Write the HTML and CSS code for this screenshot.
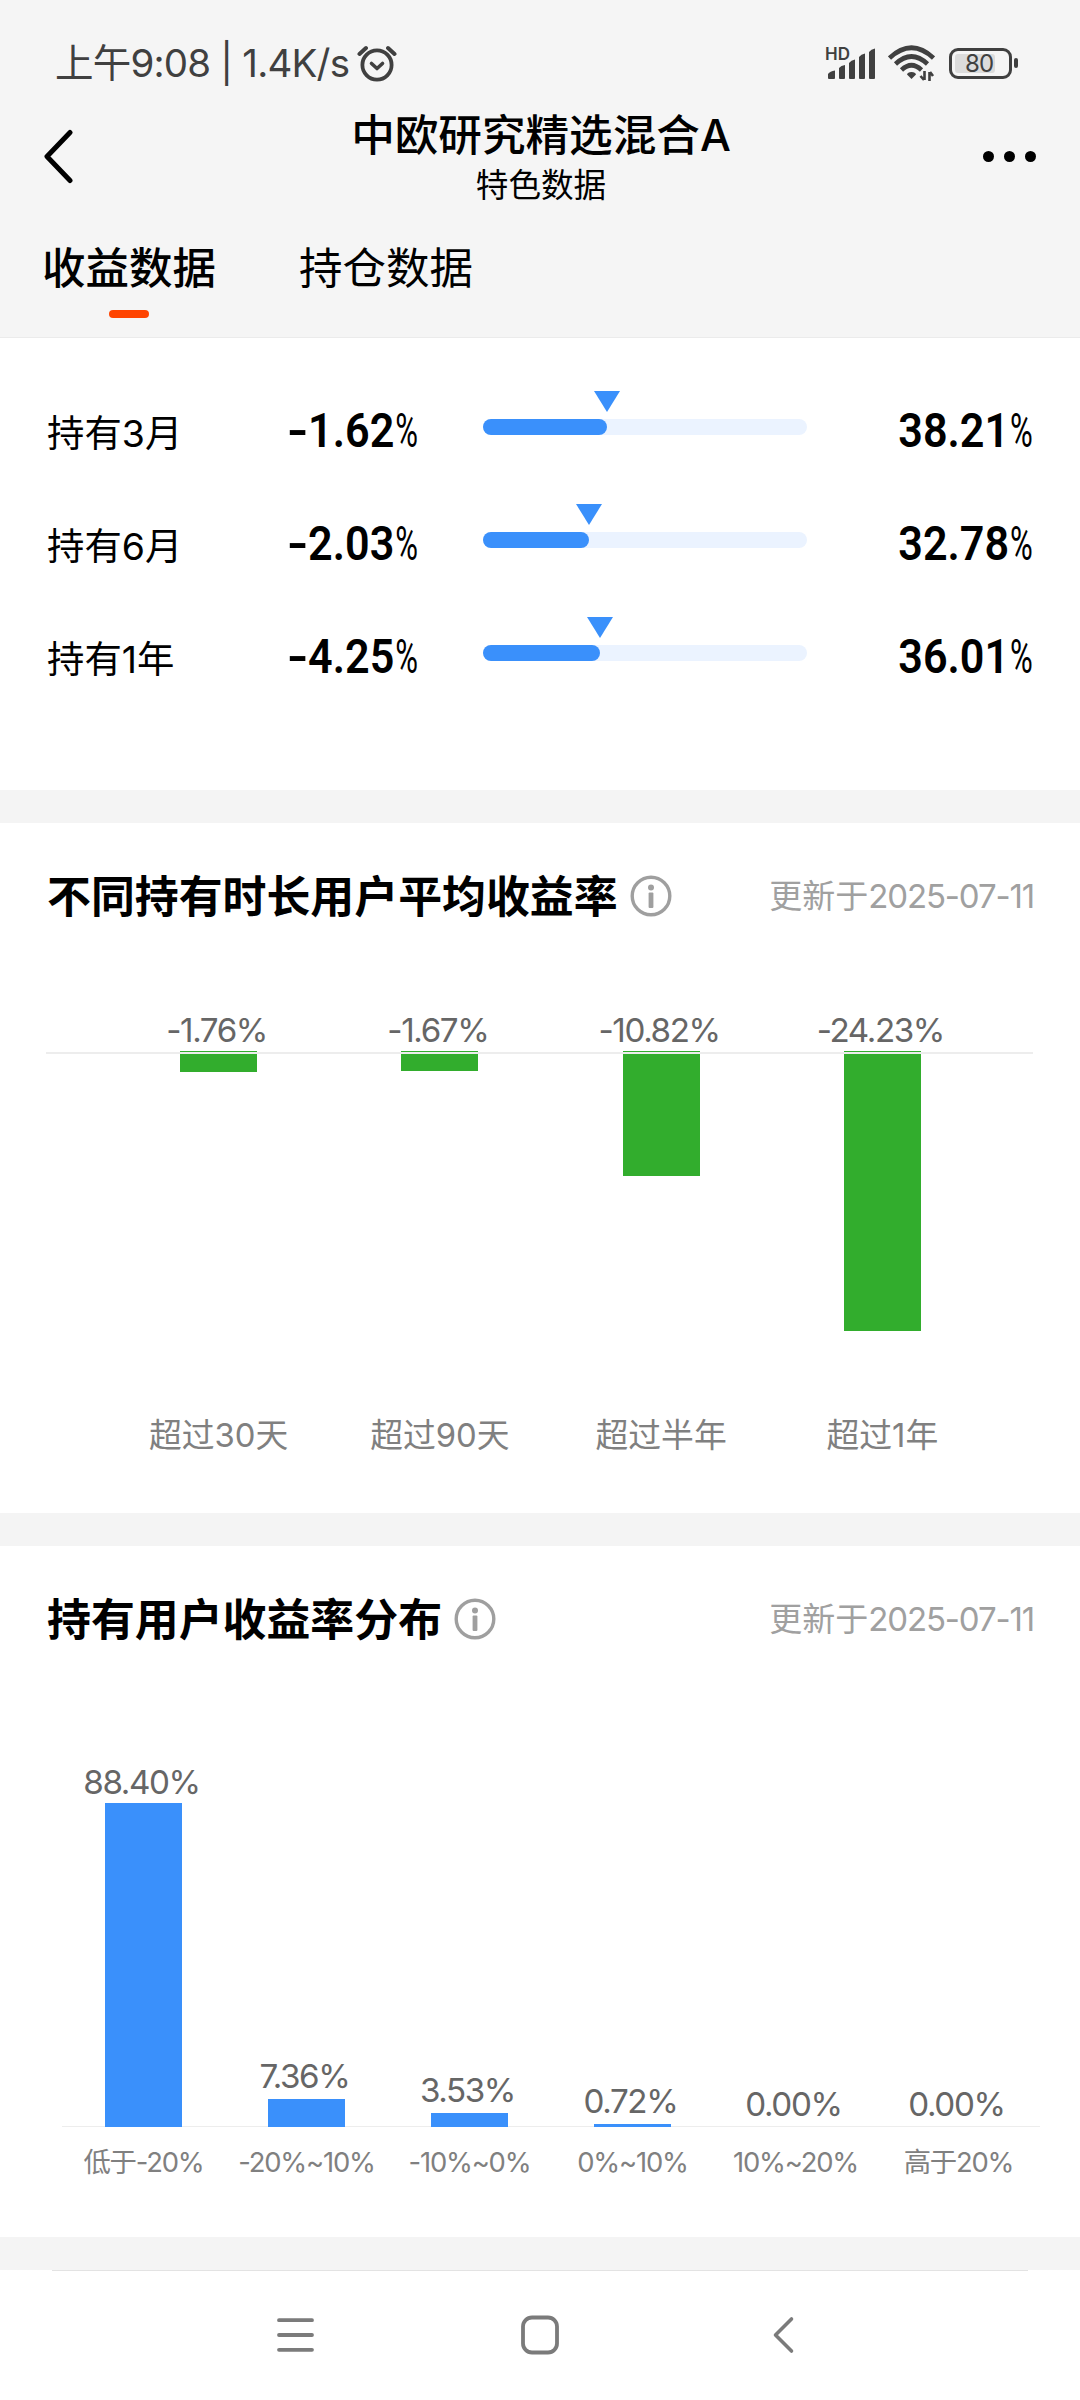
FILE: index.html
```
<!DOCTYPE html>
<html lang="zh-CN">
<head>
    <meta charset="UTF-8">
    <meta name="viewport" content="width=device-width, initial-scale=1.0">
    <title>特色数据</title>
    <link rel="stylesheet" href="styles.css">
</head>
<body>
    <header class="header">
        <div class="status-bar">
            <span class="status-time">上午9:08 | 1.4K/s</span>
            <svg class="icon-alarm" width="40" height="38" viewBox="0 0 40 38" fill="none" stroke="#404040" stroke-linecap="round">
                <circle cx="20" cy="21" r="14.6" stroke-width="3.8"/>
                <path d="M2.5 10 L9 4 M37.5 10 L31 4" stroke-width="4"/>
                <path d="M14.5 19.5 L20 24.5 L25.5 19.5" stroke-width="3.6" stroke-linejoin="round"/>
            </svg>
            <div class="status-right">
                <div class="signal">
                    <span class="signal-hd">HD</span>
                    <svg width="50" height="34" viewBox="0 0 50 34" fill="#404040">
                        <path d="M2 32 V28 Q4 25 9 24.5 V32 Q9 33 8 33 H3 Q2 33 2 32Z"/>
                        <path d="M13 32 V22 Q15 19.5 19 19 V32 Q19 33 18 33 H14 Q13 33 13 32Z"/>
                        <path d="M23 32 V17 Q25 14 29 13.5 V32 Q29 33 28 33 H24 Q23 33 23 32Z"/>
                        <path d="M33 32 V11 Q35 8 39 7.5 V32 Q39 33 38 33 H34 Q33 33 33 32Z"/>
                        <path d="M43 32 V6 Q45 3 49 2.5 V32 Q49 33 48 33 H44 Q43 33 43 32Z"/>
                    </svg>
                </div>
                <svg class="icon-wifi" width="47" height="36" viewBox="0 0 47 36" fill="none" stroke="#404040" stroke-width="4.6">
                    <path d="M1.5 13 Q23.5 -7.5 45.5 13"/>
                    <path d="M7.5 19 Q23.5 4 39.5 19"/>
                    <path d="M13.5 25 Q23.5 15.5 33.5 25"/>
                    <path d="M23.5 27 Q27.5 27 28 29.5 L23.5 34 L19 29.5 Q19.5 27 23.5 27Z" fill="#404040" stroke="none"/>
                    <path d="M36.5 26 V35 M32.5 31 L36 35 M41.5 36 V27 M45 31 L42 27" stroke-width="2.6"/>
                </svg>
                <div class="battery"><span class="battery-level">80</span></div>
                <i class="battery-cap"></i>
            </div>
        </div>

        <div class="nav-bar">
            <svg class="icon-back" width="32" height="56" viewBox="0 0 32 56" fill="none" stroke="#000" stroke-width="5" stroke-linecap="round" stroke-linejoin="round">
                <path d="M27 4.5 L4 28.5 L27 52.5"/>
            </svg>
            <div class="nav-title">
                <h1>中欧研究精选混合A</h1>
                <p>特色数据</p>
            </div>
            <div class="more"><i></i><i></i><i></i></div>
        </div>

        <div class="tabs">
            <div class="tab active">收益数据</div>
            <div class="tab">持仓数据</div>
        </div>
    </header>

    <section class="hold-list">
        <div class="hold-row">
            <span class="hold-label">持有3月</span>
            <span class="num hold-return"><i>-</i>1.62<em>%</em></span>
            <div class="track"><div class="fill" style="width: 38.21%"></div></div>
            <span class="num hold-ratio">38.21<em>%</em></span>
        </div>
        <div class="hold-row">
            <span class="hold-label">持有6月</span>
            <span class="num hold-return"><i>-</i>2.03<em>%</em></span>
            <div class="track"><div class="fill" style="width: 32.78%"></div></div>
            <span class="num hold-ratio">32.78<em>%</em></span>
        </div>
        <div class="hold-row">
            <span class="hold-label">持有1年</span>
            <span class="num hold-return"><i>-</i>4.25<em>%</em></span>
            <div class="track"><div class="fill" style="width: 36.01%"></div></div>
            <span class="num hold-ratio">36.01<em>%</em></span>
        </div>
    </section>

    <section class="card avg-card">
        <div class="card-head">
            <h2>不同持有时长用户平均收益率</h2>
            <svg class="icon-info" width="42" height="42" viewBox="0 0 42 42" fill="#9f9f9f">
                <circle cx="21" cy="21" r="18.8" fill="none" stroke="#9f9f9f" stroke-width="3.4"/>
                <circle cx="21" cy="12.5" r="3"/>
                <rect x="18.6" y="17.5" width="4.8" height="15.5" rx="1"/>
            </svg>
            <span class="update">更新于<b>2025-07-11</b></span>
        </div>
        <div class="avg-chart">
            <div class="avg-col">
                <span class="value">-1.76%</span>
                <div class="avg-plot"><div class="bar-down" style="height: 21px"></div></div>
                <span class="name">超过30天</span>
            </div>
            <div class="avg-col">
                <span class="value">-1.67%</span>
                <div class="avg-plot"><div class="bar-down" style="height: 20px"></div></div>
                <span class="name">超过90天</span>
            </div>
            <div class="avg-col">
                <span class="value">-10.82%</span>
                <div class="avg-plot"><div class="bar-down" style="height: 125px"></div></div>
                <span class="name">超过半年</span>
            </div>
            <div class="avg-col">
                <span class="value">-24.23%</span>
                <div class="avg-plot"><div class="bar-down" style="height: 280px"></div></div>
                <span class="name">超过1年</span>
            </div>
        </div>
    </section>

    <section class="card dist-card">
        <div class="card-head">
            <h2>持有用户收益率分布</h2>
            <svg class="icon-info" width="42" height="42" viewBox="0 0 42 42" fill="#9f9f9f">
                <circle cx="21" cy="21" r="18.8" fill="none" stroke="#9f9f9f" stroke-width="3.4"/>
                <circle cx="21" cy="12.5" r="3"/>
                <rect x="18.6" y="17.5" width="4.8" height="15.5" rx="1"/>
            </svg>
            <span class="update">更新于<b>2025-07-11</b></span>
        </div>
        <div class="dist-chart">
            <div class="dist-col">
                <span class="value">88.40%</span>
                <div class="bar-up" style="height: 324px"></div>
            </div>
            <div class="dist-col">
                <span class="value">7.36%</span>
                <div class="bar-up" style="height: 28px"></div>
            </div>
            <div class="dist-col">
                <span class="value">3.53%</span>
                <div class="bar-up" style="height: 14px"></div>
            </div>
            <div class="dist-col">
                <span class="value">0.72%</span>
                <div class="bar-up" style="height: 3px"></div>
            </div>
            <div class="dist-col">
                <span class="value">0.00%</span>
            </div>
            <div class="dist-col">
                <span class="value">0.00%</span>
            </div>
        </div>
        <div class="dist-names">
            <span>低于-20%</span>
            <span>-20%~10%</span>
            <span>-10%~0%</span>
            <span>0%~10%</span>
            <span>10%~20%</span>
            <span>高于20%</span>
        </div>
    </section>

    <footer class="sys-nav">
        <svg width="40" height="40" viewBox="0 0 40 40" stroke="#7b7b7b" stroke-width="3.8" stroke-linecap="round">
            <path d="M3 5.2 H36 M3 20 H36 M3 34.8 H36"/>
        </svg>
        <svg width="40" height="40" viewBox="0 0 40 40" fill="none" stroke="#7b7b7b" stroke-width="3.8">
            <rect x="3" y="2.5" width="34" height="35" rx="9"/>
        </svg>
        <svg width="40" height="40" viewBox="0 0 40 40" fill="none" stroke="#7b7b7b" stroke-width="3.6" stroke-linecap="round" stroke-linejoin="round">
            <path d="M27.5 4 L11.5 20 L27.5 36"/>
        </svg>
    </footer>
</body>
</html>
```
FILE: styles.css
```
* {
    box-sizing: border-box;
    margin: 0;
    padding: 0;
}
body {
    width: 1080px;
    height: 2400px;
    overflow: hidden;
    background-color: #f4f4f4;
    color: #000;
    font-family: Inter, "Noto Sans CJK SC", sans-serif;
}
svg {
    display: block;
    flex: none;
}
h1, h2 {
    font-weight: 500;
}

/* header */
.header {
    height: 338px;
    background-color: #f5f5f5;
    border-bottom: 1px solid #ebebeb;
}
.status-bar {
    display: flex;
    align-items: center;
    height: 96px;
    padding: 30px 62px 0 55px;
    color: #404040;
}
.status-time {
    width: 302px;
    font-size: 38.5px;
    letter-spacing: -0.8px;
    line-height: 50px;
    white-space: nowrap;
}
.status-right {
    display: flex;
    align-items: center;
    margin-left: auto;
}
.signal {
    position: relative;
    margin-right: 12px;
}
.signal-hd {
    position: absolute;
    top: 0;
    left: -1px;
    font-size: 17px;
    font-weight: 600;
    line-height: 17px;
}
.icon-wifi {
    margin-right: 14px;
}
.battery {
    width: 63px;
    height: 31px;
    padding: 3px;
    border: 3px solid #404040;
    border-radius: 9px;
}
.battery-level {
    display: block;
    width: 40px;
    height: 19px;
    padding-left: 10px;
    background-color: #dcdcdc;
    border-radius: 3px;
    font-size: 24px;
    letter-spacing: -0.8px;
    line-height: 19px;
}
.battery-cap {
    width: 4px;
    height: 10px;
    margin-left: 2px;
    background-color: #404040;
    border-radius: 2px;
}
.nav-bar {
    display: grid;
    grid-template-columns: 60px 1fr 60px;
    align-items: center;
    height: 120px;
    padding: 0 41px 0 43px;
}
.nav-title {
    text-align: center;
}
.nav-title h1 {
    font-size: 43.6px;
    line-height: 56px;
}
.nav-title p {
    padding-top: 2px;
    font-size: 32.6px;
    line-height: 38px;
}
.more {
    display: flex;
    justify-content: flex-end;
    gap: 10px;
    padding-right: 3px;
}
.more i {
    width: 11px;
    height: 11px;
    background-color: #000;
    border-radius: 50%;
}
.tabs {
    display: flex;
    gap: 83px;
    padding: 24px 42px 0;
}
.tab {
    font-size: 43.5px;
    line-height: 56px;
}
.tab.active {
    font-weight: 500;
}
.tab.active::after {
    content: "";
    display: block;
    width: 40px;
    height: 8px;
    margin: 14px auto 0;
    background-color: #ff4400;
    border-radius: 4px;
}

/* holding periods */
.hold-list {
    height: 452px;
    padding: 32px 48px 0 47px;
    background-color: #fff;
}
.hold-row {
    display: grid;
    grid-template-columns: 240px 196px 324px 1fr;
    align-items: center;
    height: 113px;
}
.hold-label {
    padding-top: 15px;
    font-size: 37.4px;
    line-height: 50px;
}
.num {
    padding-top: 8px;
    font-family: Roboto, sans-serif;
    font-size: 49px;
    font-weight: 600;
    line-height: 50px;
    white-space: nowrap;
    transform: scaleX(0.88);
}
.num i {
    display: inline-block;
    width: 24px;
    font-style: normal;
    transform: scaleX(1.35);
    transform-origin: left;
}
.num em {
    display: inline-block;
    width: 25px;
    margin-left: 1px;
    font-style: normal;
    font-weight: 400;
    text-align: left;
    transform: scaleX(0.72);
    transform-origin: left;
}
.hold-return {
    transform-origin: left;
}
.hold-ratio {
    text-align: right;
    transform-origin: right;
}
.track {
    height: 16px;
    background-color: #ebf3ff;
    border-radius: 8px;
}
.fill {
    position: relative;
    height: 16px;
    background-color: #3a90fb;
    border-radius: 8px;
}
.fill::after {
    content: "";
    position: absolute;
    top: -28px;
    right: -13px;
    border: 13px solid transparent;
    border-top: 21px solid #3a90fb;
    border-bottom: 0;
}

/* chart cards */
.card {
    background-color: #fff;
}
.card-head {
    display: flex;
    align-items: center;
    height: 146px;
    padding: 0 46px 0 47px;
}
.card-head h2 {
    padding-top: 2px;
    font-size: 43.9px;
    font-weight: 700;
    line-height: 56px;
}
.icon-info {
    margin-left: 12px;
}
.update {
    margin-left: auto;
    color: #a0a0a0;
    font-size: 33px;
    line-height: 40px;
}
.update b {
    font-weight: 400;
    letter-spacing: -1.15px;
}
.value {
    padding-right: 4px;
    color: #666;
    font-size: 33.2px;
    letter-spacing: -1.4px;
    line-height: 40px;
    text-align: center;
}
.avg-card {
    height: 690px;
    margin-top: 33px;
}
.avg-chart {
    position: relative;
    display: flex;
    margin-top: 41px;
    padding: 0 87px 0 108px;
}
/* zero line, drawn over the bars */
.avg-chart::after {
    content: "";
    position: absolute;
    top: 42px;
    left: 46px;
    right: 47px;
    height: 2px;
    background-color: #ededed;
}
.avg-col {
    display: flex;
    flex: 1;
    flex-direction: column;
    align-items: center;
}
.avg-plot {
    height: 365px;
    padding-top: 1px;
}
.bar-down {
    width: 77px;
    background-color: #32ad2d;
}
.name {
    color: #808080;
    font-size: 32.8px;
    line-height: 40px;
}
.dist-card {
    height: 691px;
    margin-top: 33px;
}
.dist-chart {
    display: flex;
    height: 435px;
    margin: 0 40px 0 62px;
    background: linear-gradient(#ededed, #ededed) bottom / 100% 1px no-repeat;
}
.dist-col {
    display: flex;
    flex: 1;
    flex-direction: column;
    align-items: center;
    justify-content: flex-end;
}
.dist-col .value {
    margin-bottom: 3px;
}
.dist-col:first-child .value {
    margin-bottom: 1px;
}
.bar-up {
    width: 77px;
    background-color: #3a90fb;
}
.dist-names {
    display: flex;
    margin: 17px 40px 0 62px;
}
.dist-names span {
    flex: 1;
    color: #808080;
    font-size: 27.4px;
    letter-spacing: -1.2px;
    line-height: 36px;
    text-align: center;
    white-space: nowrap;
}

/* system navigation */
.sys-nav {
    display: flex;
    justify-content: center;
    gap: 204px;
    height: 130px;
    margin-top: 33px;
    padding-top: 45px;
    background: linear-gradient(#e3e3e3, #e3e3e3) top / 976px 1px no-repeat #fff;
}
```
